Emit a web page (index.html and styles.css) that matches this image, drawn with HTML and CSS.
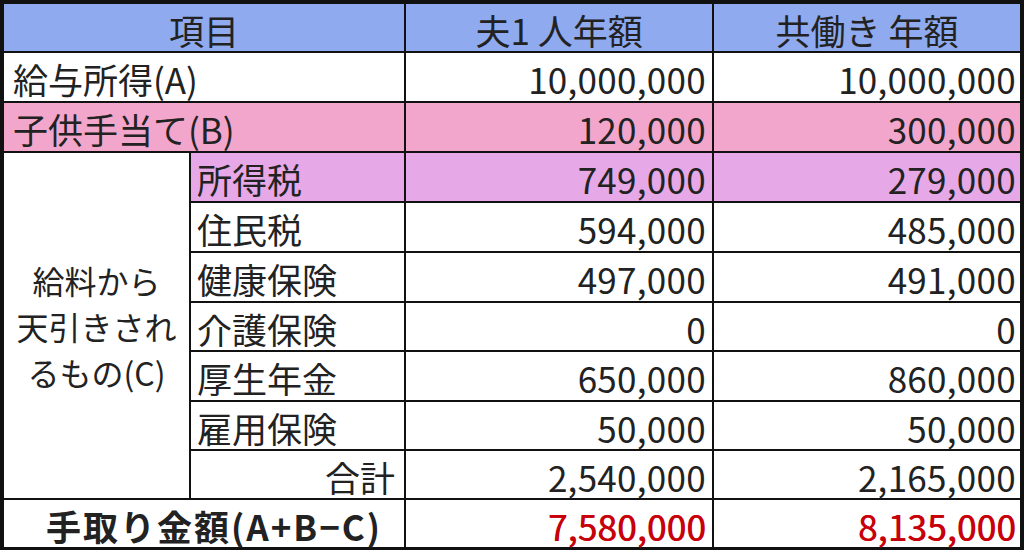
FILE: index.html
```html
<!DOCTYPE html>
<html lang="ja">
<head>
<meta charset="utf-8">
<title>手取り金額比較</title>
<link rel="stylesheet" href="styles.css">
</head>
<body>
<table class="sheet">
  <colgroup>
    <col class="col-a">
    <col class="col-b">
    <col class="col-c">
    <col class="col-d">
  </colgroup>
  <tr class="row-head">
    <th colspan="2">項目</th>
    <th>夫1 人年額</th>
    <th>共働き 年額</th>
  </tr>
  <tr class="row-std">
    <td colspan="2" class="lbl">給与所得(A)</td>
    <td class="num">10,000,000</td>
    <td class="num">10,000,000</td>
  </tr>
  <tr class="row-std">
    <td colspan="2" class="lbl pink">子供手当て(B)</td>
    <td class="num pink">120,000</td>
    <td class="num pink">300,000</td>
  </tr>
  <tr class="row-std">
    <td rowspan="7" class="merged">給料から<br>天引きされ<br>るもの(C)</td>
    <td class="sub orchid">所得税</td>
    <td class="num orchid">749,000</td>
    <td class="num orchid">279,000</td>
  </tr>
  <tr class="row-std">
    <td class="sub">住民税</td>
    <td class="num">594,000</td>
    <td class="num">485,000</td>
  </tr>
  <tr class="row-std">
    <td class="sub">健康保険</td>
    <td class="num">497,000</td>
    <td class="num">491,000</td>
  </tr>
  <tr class="row-short">
    <td class="sub">介護保険</td>
    <td class="num">0</td>
    <td class="num">0</td>
  </tr>
  <tr class="row-std">
    <td class="sub">厚生年金</td>
    <td class="num">650,000</td>
    <td class="num">860,000</td>
  </tr>
  <tr class="row-short">
    <td class="sub">雇用保険</td>
    <td class="num">50,000</td>
    <td class="num">50,000</td>
  </tr>
  <tr class="row-short">
    <td class="sub total">合計</td>
    <td class="num">2,540,000</td>
    <td class="num">2,165,000</td>
  </tr>
  <tr class="row-last">
    <td colspan="2" class="net">手取り金額(A+B−C)</td>
    <td class="num red">7,580,000</td>
    <td class="num red">8,135,000</td>
  </tr>
</table>
</body>
</html>
```

FILE: styles.css
```css
html, body {
  margin: 0;
  padding: 0;
  background: #ffffff;
}

.sheet {
  width: 1024px;
  height: 550px;
  table-layout: fixed;
  border-collapse: separate;
  border-spacing: 0;
  border: 4px solid #111111;
  font-family: "Noto Sans CJK JP", "Noto Sans", sans-serif;
  font-size: 35px;
  font-weight: 400;
  color: #222222;
  box-sizing: border-box;
}

.col-a { width: 187px; }
.col-b { width: 215px; }
.col-c { width: 308px; }
.col-d { width: 306px; }

.row-head { height: 49px; }
.row-std { height: 50px; }
.row-short { height: 49px; }
.row-last { height: 47px; }

.sheet th,
.sheet td {
  box-sizing: border-box;
  padding: 4px 0 0 0;
  border-right: 2px solid #111111;
  border-bottom: 2px solid #111111;
  line-height: 42px;
  white-space: nowrap;
  vertical-align: middle;
}

.sheet th:last-child,
.sheet td:last-child {
  border-right: none;
}

.sheet .row-last td {
  border-bottom: none;
}

.sheet th {
  background: #8faaee;
  font-weight: 400;
  text-align: center;
}

.sheet .lbl {
  text-align: left;
  padding-left: 9px;
}

.sheet .sub {
  text-align: left;
  padding-left: 6px;
}

.sheet .sub.total {
  text-align: right;
  padding-left: 0;
  padding-right: 9px;
}

.sheet .num {
  text-align: right;
  padding-right: 6px;
  letter-spacing: 0.3px;
}

.sheet .num:last-child {
  padding-right: 4px;
}

.sheet .merged {
  text-align: center;
  font-size: 32px;
  line-height: 46px;
  background: #ffffff;
  padding: 0;
}

.sheet .pink {
  background: #f3a6cc;
}

.sheet .orchid {
  background: #e6a8e6;
}

.sheet .net {
  text-align: center;
  font-weight: 700;
  letter-spacing: 2px;
  padding-left: 20px;
}

.sheet .red {
  color: #c8000a;
  text-shadow: 0.6px 0 0 #c8000a;
}
```
